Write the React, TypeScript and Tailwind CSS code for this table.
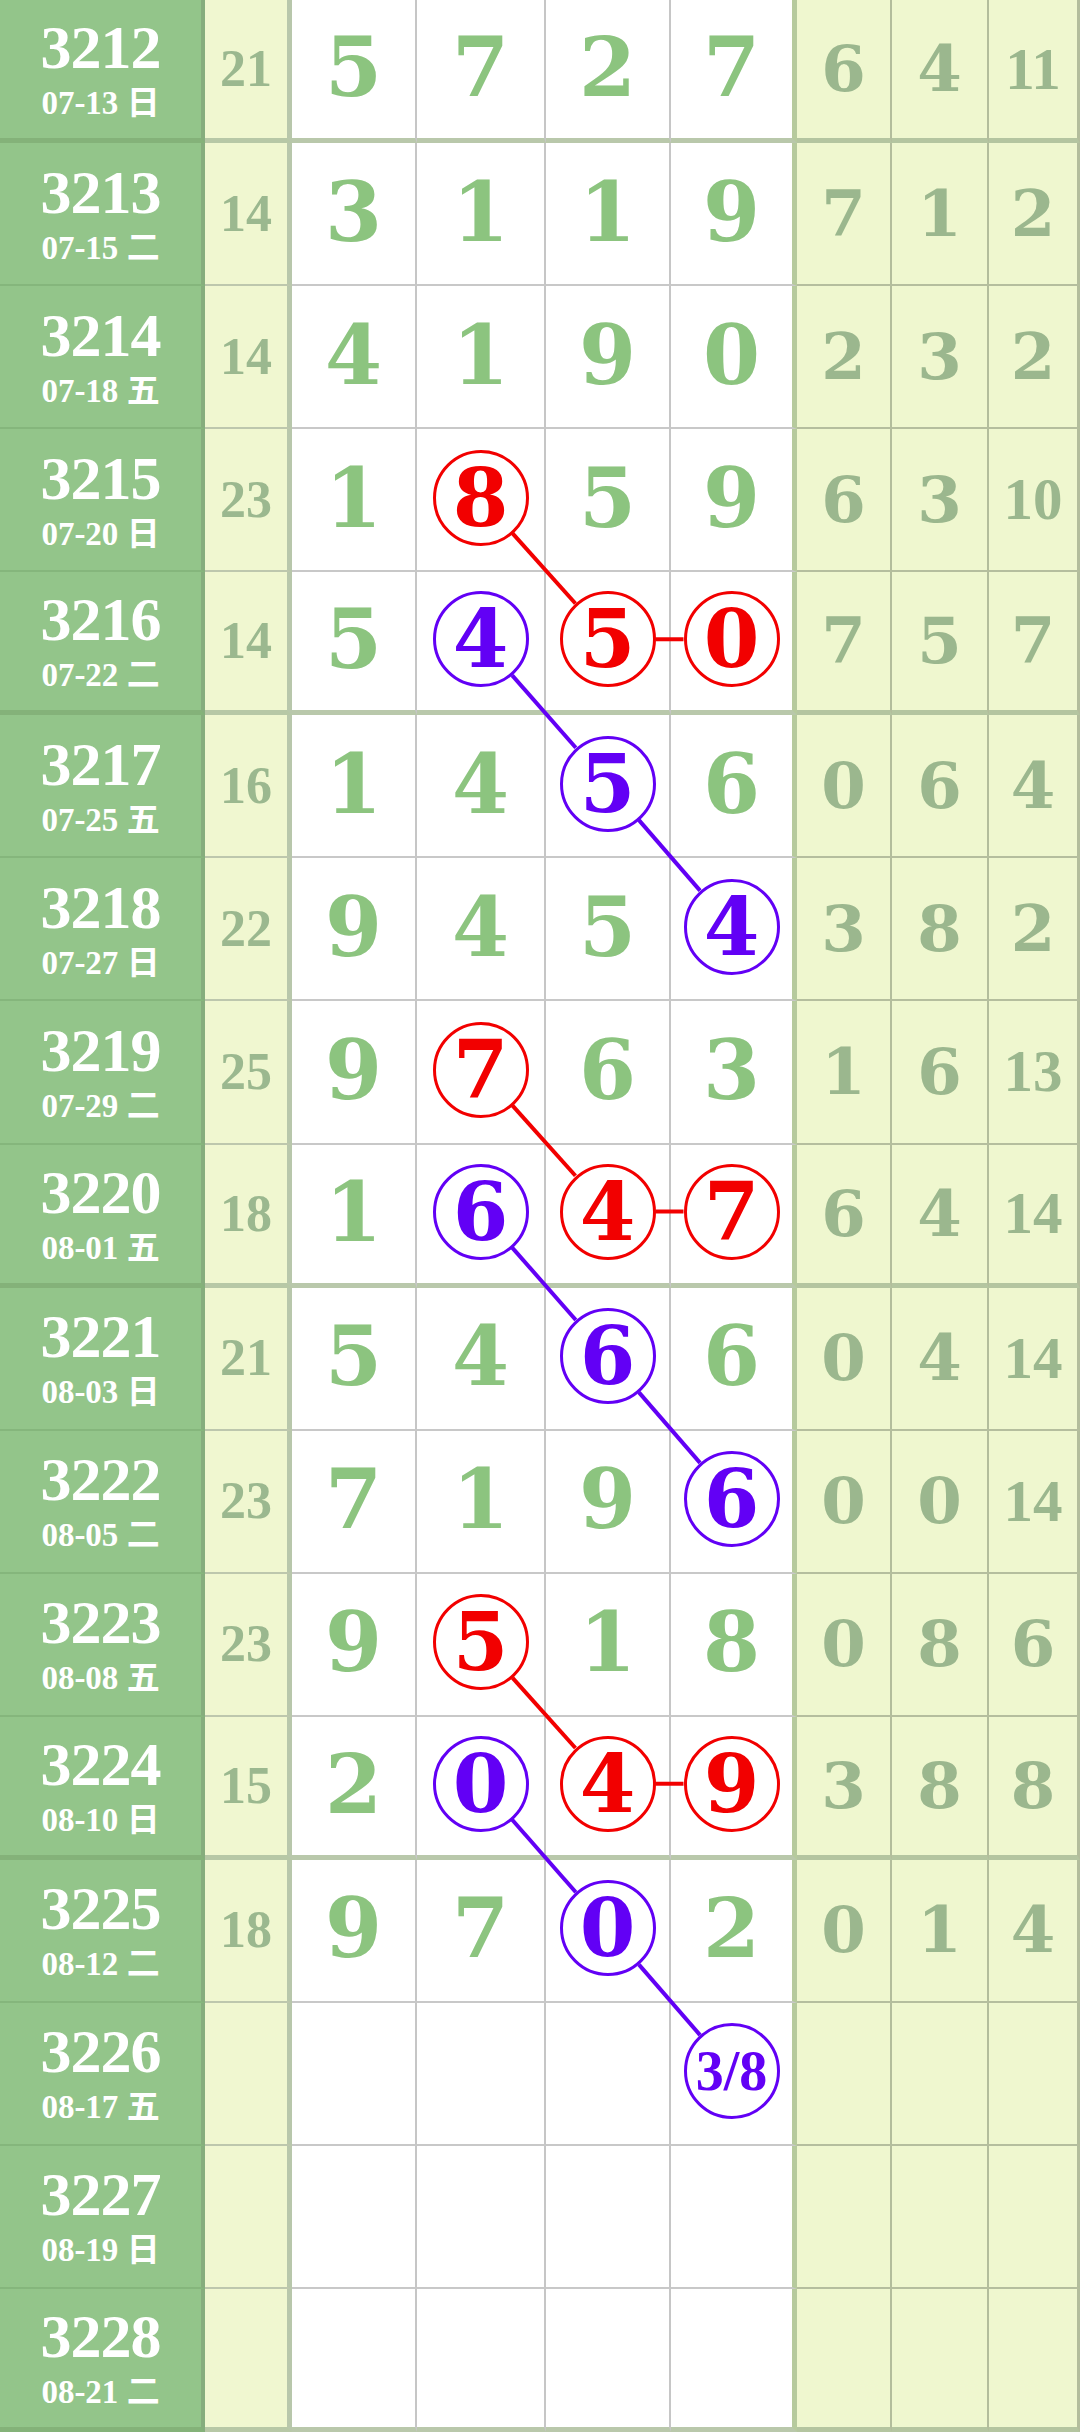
const rows: { no: string; date: string; day: string; sum?: string; d: string[]; r: string[] }[] = [
  { no: "3212", date: "07-13", day: "日", sum: "21", d: ["5", "7", "2", "7"], r: ["6", "4", "11"] },
  { no: "3213", date: "07-15", day: "二", sum: "14", d: ["3", "1", "1", "9"], r: ["7", "1", "2"] },
  { no: "3214", date: "07-18", day: "五", sum: "14", d: ["4", "1", "9", "0"], r: ["2", "3", "2"] },
  { no: "3215", date: "07-20", day: "日", sum: "23", d: ["1", "8", "5", "9"], r: ["6", "3", "10"] },
  { no: "3216", date: "07-22", day: "二", sum: "14", d: ["5", "4", "5", "0"], r: ["7", "5", "7"] },
  { no: "3217", date: "07-25", day: "五", sum: "16", d: ["1", "4", "5", "6"], r: ["0", "6", "4"] },
  { no: "3218", date: "07-27", day: "日", sum: "22", d: ["9", "4", "5", "4"], r: ["3", "8", "2"] },
  { no: "3219", date: "07-29", day: "二", sum: "25", d: ["9", "7", "6", "3"], r: ["1", "6", "13"] },
  { no: "3220", date: "08-01", day: "五", sum: "18", d: ["1", "6", "4", "7"], r: ["6", "4", "14"] },
  { no: "3221", date: "08-03", day: "日", sum: "21", d: ["5", "4", "6", "6"], r: ["0", "4", "14"] },
  { no: "3222", date: "08-05", day: "二", sum: "23", d: ["7", "1", "9", "6"], r: ["0", "0", "14"] },
  { no: "3223", date: "08-08", day: "五", sum: "23", d: ["9", "5", "1", "8"], r: ["0", "8", "6"] },
  { no: "3224", date: "08-10", day: "日", sum: "15", d: ["2", "0", "4", "9"], r: ["3", "8", "8"] },
  { no: "3225", date: "08-12", day: "二", sum: "18", d: ["9", "7", "0", "2"], r: ["0", "1", "4"] },
  { no: "3226", date: "08-17", day: "五", d: ["", "", "", "3/8"], r: ["", "", ""] },
  { no: "3227", date: "08-19", day: "日", d: ["", "", "", ""], r: ["", "", ""] },
  { no: "3228", date: "08-21", day: "二", d: ["", "", "", ""], r: ["", "", ""] },
];

// circled cells: "row-col" (col 0..3 of the digit block)
const RED = "#f20000";
const PURPLE = "#6200f5";
const marks: Record<string, string> = {
  "3-1": RED, "4-1": PURPLE, "4-2": RED, "4-3": RED, "5-2": PURPLE, "6-3": PURPLE,
  "7-1": RED, "8-1": PURPLE, "8-2": RED, "8-3": RED, "9-2": PURPLE, "10-3": PURPLE,
  "11-1": RED, "12-1": PURPLE, "12-2": RED, "12-3": RED, "13-2": PURPLE, "14-3": PURPLE,
};

const links: [number, number, number, number, string][] = [
  [3, 1, 4, 2, RED], [4, 2, 4, 3, RED],
  [7, 1, 8, 2, RED], [8, 2, 8, 3, RED],
  [11, 1, 12, 2, RED], [12, 2, 12, 3, RED],
  [4, 1, 5, 2, PURPLE], [5, 2, 6, 3, PURPLE],
  [8, 1, 9, 2, PURPLE], [9, 2, 10, 3, PURPLE],
  [12, 1, 13, 2, PURPLE], [13, 2, 14, 3, PURPLE],
];

const ROW_H = 2432 / 17;
const colX = [353.5, 480.5, 607.5, 731.5];
const thick = (i: number) => i % 4 === 0;
const cy = (i: number) => i * ROW_H + (ROW_H - (thick(i) ? 5 : 2)) / 2 - 2;
const R = 48;

const serif = "font-['Liberation_Serif','Noto_Sans_CJK_SC',serif] font-bold";
const big = "font-['DejaVu_Serif',serif] font-bold";

function Lines() {
  return (
    <svg className="pointer-events-none absolute inset-0 h-full w-full" width={1080} height={2432}>
      {links.map(([r1, c1, r2, c2, color], k) => {
        const x1 = colX[c1], y1 = cy(r1), x2 = colX[c2], y2 = cy(r2);
        const len = Math.hypot(x2 - x1, y2 - y1);
        const ux = (x2 - x1) / len, uy = (y2 - y1) / len;
        return (
          <line key={k} x1={x1 + ux * R} y1={y1 + uy * R} x2={x2 - ux * R} y2={y2 - uy * R}
            stroke={color} strokeWidth={4} />
        );
      })}
    </svg>
  );
}

export default function App() {
  return (
    <div className={`relative flex h-[2432px] w-[1080px] flex-col overflow-hidden bg-white ${serif}`}>
      {rows.map((row, i) => {
        const t = thick(i);
        return (
          <div key={row.no} className="grid min-h-0 flex-1 grid-cols-[205px_87px_125px_129px_125px_126px_95px_97px_91px]">
            <div className={`flex flex-col items-center justify-center bg-[#93c58a] pb-[2px] text-white border-r-[4px] border-r-[#86ad7d] ${t ? "border-b-[5px] border-b-[#84b279]" : "border-b-[2px] border-b-[#85b67c]"}`}>
              <div className="text-[62px] leading-none tracking-[-1px]">{row.no}</div>
              <div className="mt-[9px] text-[33px] leading-none">
                {row.date} {row.day}
              </div>
            </div>
            <div className={`flex items-center justify-center bg-[#f0f7d0] text-[52px] leading-none text-[#9bb88f] border-r-[5px] border-r-[#b8c7ab] ${t ? "border-b-[5px] border-b-[#b7c8a6]" : "border-b-[2px] border-b-[#bdc7ad]"}`}>
              {row.sum}
            </div>
            {row.d.map((v, c) => {
              const color = marks[`${i}-${c}`];
              return (
                <div key={c} className={`flex items-center justify-center bg-white pb-[4px] ${c === 3 ? "border-r-[5px] border-r-[#b6ca9d]" : "border-r-[2px] border-r-[#c6c6c6]"} ${t ? "border-b-[5px] border-b-[#b9c8ab]" : "border-b-[2px] border-b-[#c8c8c8]"}`}>
                  {color ? (
                    <div className="relative z-10 flex h-[96px] w-[96px] items-center justify-center rounded-full border-[3.5px] bg-white" style={{ borderColor: color, color }}>
                      {v.length > 1 ? (
                        <span className="text-[56px] leading-none">{v}</span>
                      ) : (
                        <span className={`${big} text-[80px] leading-none`}>{v}</span>
                      )}
                    </div>
                  ) : (
                    <span className={`${big} text-[82px] leading-none text-[#8cc47f]`}>{v}</span>
                  )}
                </div>
              );
            })}
            {row.r.map((v, c) => (
              <div key={c} className={`flex items-center justify-center bg-[#eff7cf] leading-none text-[#9bb78e] ${v.length > 1 ? "text-[59px]" : `${big} text-[64px]`} ${c === 2 ? "border-r-[3px]" : "border-r-[2px]"} border-r-[#b3bd9c] ${t ? "border-b-[5px] border-b-[#b4c5a0]" : "border-b-[2px] border-b-[#b5be9e]"}`}>
                {v}
              </div>
            ))}
          </div>
        );
      })}
      <Lines />
    </div>
  );
}
